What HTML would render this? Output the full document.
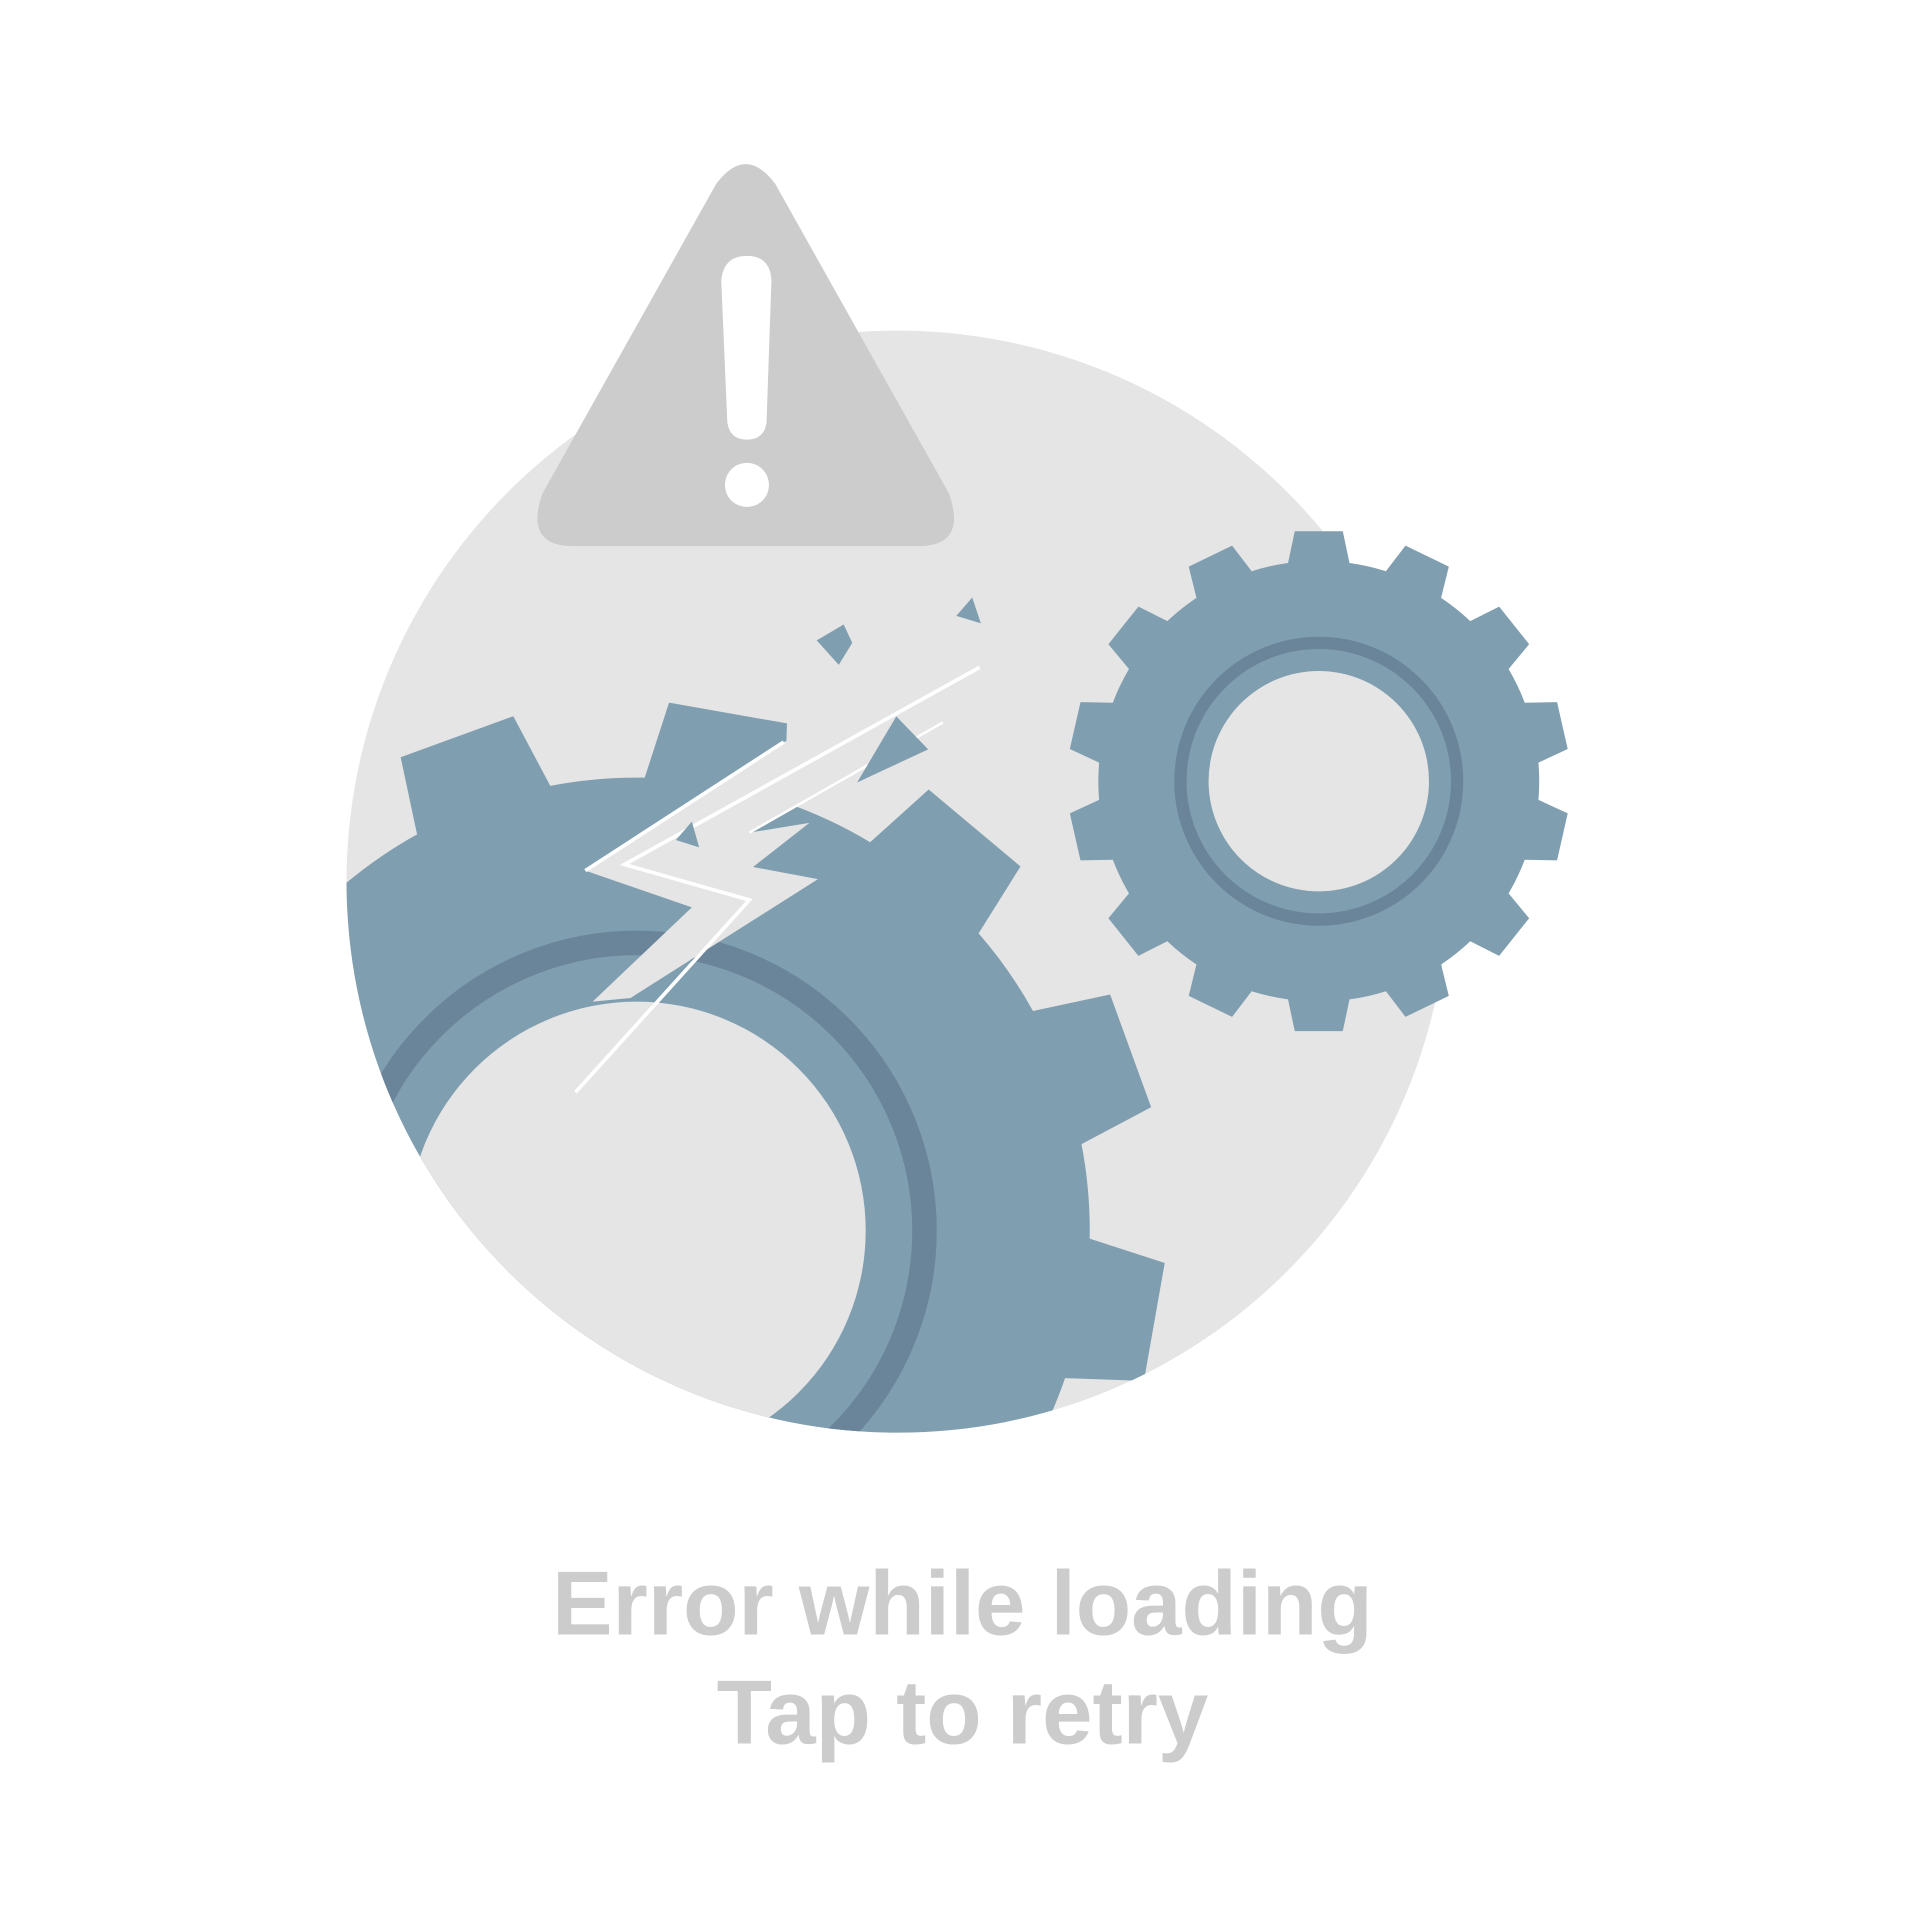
<!DOCTYPE html>
<html><head><meta charset="utf-8">
<style>
html,body{margin:0;padding:0;background:#fff;width:1920px;height:1920px;overflow:hidden}
svg{display:block}
</style></head><body>
<svg id="s" width="1920" height="1920" viewBox="0 0 1568 1568" xmlns="http://www.w3.org/2000/svg">
<defs><clipPath id="cc"><circle cx="733" cy="720" r="450"/></clipPath></defs>
<circle cx="733" cy="720" r="450" fill="#e5e5e5"/>
<g clip-path="url(#cc)">
  <path id="big" fill="#7f9eb0"/>
  <circle cx="520" cy="1005" r="235" fill="none" stroke="#6a8499" stroke-width="20"/>
  <circle cx="520" cy="1005" r="187" fill="#e5e5e5"/>
  <polygon points="478,711 640,606 800,545 760,595 612,680 661,672 615,708 668,718 515,815 484,818 565,741" fill="#e5e5e5"/>
  <polyline points="800,545 510,706 612,735 470,892" fill="none" stroke="#fff" stroke-width="3"/>
  <polyline points="478,711 640,606" fill="none" stroke="#fff" stroke-width="3"/>
  <polyline points="770,590 612,680" fill="none" stroke="#fff" stroke-width="2"/>
</g>
<path id="small" fill="#7f9eb0"/>
<circle cx="1077" cy="638" r="113" fill="none" stroke="#6a8499" stroke-width="10"/>
<circle cx="1077" cy="638" r="90" fill="#e5e5e5"/>
<polygon points="667,523 689,510 696,525 685,543" fill="#7f9eb0"/>
<polygon points="781,503 794,488 801,509" fill="#7f9eb0"/>
<polygon points="732,585 758,612 700,639" fill="#7f9eb0"/>
<polygon points="552,686 565,671 571,692" fill="#7f9eb0"/>
<path d="M585,150 Q609,118 633,150 L775,403 Q790,446 750,446 L468,446 Q428,446 443,403 Z" fill="#cccccc"/>
<path d="M589,229 Q591,209 610,209 Q629,209 630,229 L626,345 Q624,359 610,359 Q596,359 594,345 Z" fill="#fff"/>
<circle cx="610" cy="396" r="18" fill="#fff"/>
<text x="786" y="1335" text-anchor="middle" font-family="Liberation Sans, sans-serif" font-weight="bold" font-size="74" fill="#cccccc">Error while loading</text>
<text x="786" y="1424" text-anchor="middle" font-family="Liberation Sans, sans-serif" font-weight="bold" font-size="74" fill="#cccccc">Tap to retry</text>
</svg>
<script>
function gear(cx,cy,n,ro,ri,start,tw,bw){
 var d="",step=360/n;
 for(var i=0;i<n;i++){
  var a=start+i*step;
  var pts=[[ri,a-bw],[ro,a-tw],[ro,a+tw],[ri,a+bw]];
  pts.forEach(function(p,j){
   var r=p[1]*Math.PI/180;
   d+=(i==0&&j==0?"M":"L")+(cx+p[0]*Math.cos(r)).toFixed(1)+","+(cy+p[0]*Math.sin(r)).toFixed(1);
  });
  var nx=start+(i+1)*step-bw, r2=nx*Math.PI/180;
  d+="A"+ri+","+ri+" 0 0 1 "+(cx+ri*Math.cos(r2)).toFixed(1)+","+(cy+ri*Math.sin(r2)).toFixed(1);
 }
 return d+"Z";
}
document.getElementById("big").setAttribute("d",gear(520,1005,12,432,370,-80,6.5,9));
document.getElementById("small").setAttribute("d",gear(1077,638,14,205,180,-90,5.5,8));
</script>
</body></html>
